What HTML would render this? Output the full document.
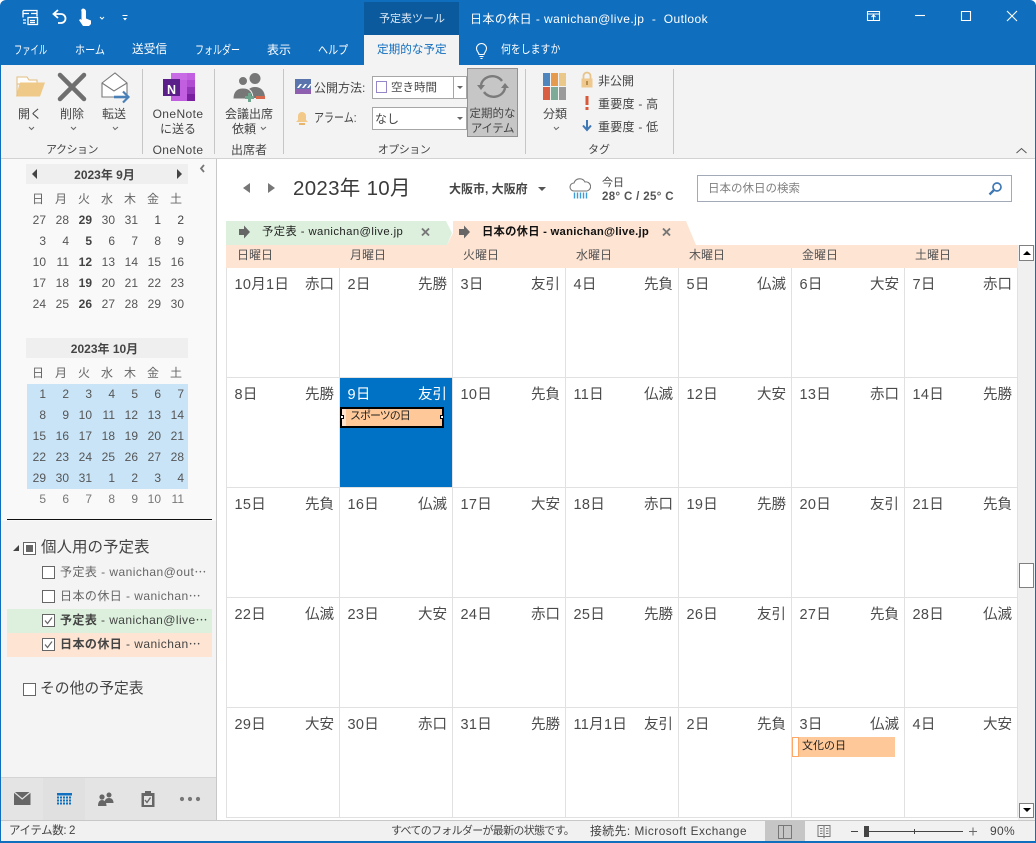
<!DOCTYPE html>
<html lang="ja"><head><meta charset="utf-8"><title>Outlook</title>
<style>
*{box-sizing:border-box}
html,body{margin:0;padding:0;background:#fff}
body{width:1036px;height:843px;position:relative;overflow:hidden;font-family:"Liberation Sans","Noto Sans CJK JP",sans-serif;color:#444;font-size:12px}
.a{position:absolute}
.t{position:absolute;white-space:nowrap;line-height:16px;height:16px}
.c{transform:translateX(-50%)}
.w{color:#fff}
.sx{transform-origin:left center}
.sep{position:absolute;width:1px;top:69px;height:85px;background:#c6c6c6}
.mc{position:absolute;left:27px;width:161px;display:grid;grid-template-columns:repeat(7,23px);grid-auto-rows:21px;font-size:12px;line-height:21px;text-align:right;color:#555}
.mc span{padding-right:4px}
.mc b{padding-right:4px;color:#444}
.mh{position:absolute;left:26px;width:162px;height:20px;background:#efefef;text-align:center;font-weight:bold;font-size:12px;line-height:22px;color:#444;padding-right:5px}
.wd{text-align:center;font-size:12px;color:#666}
.mc span.wd{padding:0 1px 0 0}
.cb{position:absolute;width:13px;height:13px;border:1px solid #666;background:#fff}
.grid{position:absolute;left:227px;top:268px;display:grid;grid-template-columns:repeat(7,113px);grid-auto-rows:110px;border-left:0}
.grid div{position:relative;border-right:1px solid #e1e1e1;border-bottom:1px solid #e1e1e1;font-size:14.5px;color:#4a4a4a}
.grid b,.grid i{position:absolute;top:8px;font-weight:normal;font-style:normal;line-height:18px;white-space:nowrap}
.grid b{left:7.500px;letter-spacing:.3px}.grid i{right:5px}
.grid .sel{background:#0072c6;color:#fff;margin-top:0}
.wh{position:absolute;top:247px;font-size:12px;line-height:16px;color:#555}
</style></head><body>

<!-- title bar -->
<div class="a" style="left:0;top:0;width:1036px;height:65px;background:#106ebe;border-radius:6px 6px 0 0"></div>
<div class="a" style="left:364px;top:2px;width:95px;height:33px;background:#0b5a9e"></div>
<div class="a" style="left:364px;top:35px;width:95px;height:30px;background:#f3f3f3"></div>
<div class="t w c" style="left:412px;top:11px;font-size:11px;color:#dbe8f5">予定表ツール</div>
<div class="t w" style="left:470px;top:11px;font-size:12px;letter-spacing:.42px">日本の休日 - wanichan@live.jp&nbsp; -&nbsp; Outlook</div>

<svg class="a" style="left:0;top:0" width="200" height="35" fill="none" stroke="#fff" stroke-width="1.3">
<path d="M23 10.500h14v6M23 10.500v7M23 13.500h6M31 13.500h6M28 17.500h9.500v7H28zM23 20h3M23 23h3M30 20.500h5M30 22.500h5"/>
<path d="M58 10l-4.500 4 4.500 4M54 14h7a4.500 4.500 0 0 1 0 9h-3" stroke-width="1.800"/>
<path d="M83 8.500a3 3 0 0 1 3 3v7l5 2v3.500l-2 2h-6l-4-6 1.500-1 1 1V11.500a2 2 0 0 1 1.500-3z" fill="#fff" stroke="none"/>
<path d="M100 17l2 2 2-2" stroke-width="1"/><path d="M122.500 15.500h5" stroke-width="1"/>
<path d="M123 18h4l-2 2.500z" fill="#fff" stroke="none"/>
</svg>

<div class="t w sx" style="left:14px;top:42px;font-size:12px;transform:scaleX(.69)">ファイル</div>
<div class="t w sx" style="left:75px;top:42px;font-size:12px;transform:scaleX(.84)">ホーム</div>
<div class="t w" style="left:132px;top:42px;font-size:11.700px">送受信</div>
<div class="t w sx" style="left:195px;top:42px;font-size:12px;transform:scaleX(.75)">フォルダー</div>
<div class="t w" style="left:267px;top:42px;font-size:12px">表示</div>
<div class="t w sx" style="left:318px;top:42px;font-size:12px;transform:scaleX(.84)">ヘルプ</div>
<div class="t" style="left:377px;top:42px;font-size:11.600px;color:#106ebe">定期的な予定</div>
<svg class="a" style="left:474px;top:42px" width="16" height="18" fill="none" stroke="#fff" stroke-width="1.100"><path d="M5 12.500c0-2-2.500-3-2.500-6a5 5 0 0 1 10 0c0 3-2.500 4-2.500 6zM5.500 14.500h4M6.500 16.500h2"/></svg>
<div class="t w sx" style="left:501px;top:42px;font-size:11.500px;transform:scaleX(.86)">何をしますか</div>

<svg class="a" style="left:860px;top:5px" width="170" height="22" fill="none" stroke="#fff" stroke-width="1.100">
<path d="M7.500 6.500h12v9h-12zM7.500 9h12M13.500 15V10.500M11.500 12l2-2 2 2"/>
<path d="M55 10.500h10"/>
<path d="M101.500 6.500h9v9h-9z"/>
<path d="M147 6l10 10M157 6l-10 10"/>
</svg>

<!-- ribbon -->
<div class="a" style="left:1px;top:65px;width:1034px;height:94px;background:#f3f3f3;border-bottom:1px solid #d2d2d2"></div>
<div class="sep" style="left:142px"></div><div class="sep" style="left:214px"></div><div class="sep" style="left:283px"></div><div class="sep" style="left:525px"></div><div class="sep" style="left:673px"></div>

<svg class="a" style="left:0;top:65px" width="300" height="45">
<!-- folder -->
<path d="M17 12h10l2 3h8v4H17z" fill="#fdfdfd" stroke="#e3bd7e"/>
<path d="M20 17.500h25l-5 14H16z" fill="#efc987"/>
<path d="M17 13v18" stroke="#e3bd7e"/>
<!-- X -->
<path d="M60 10l24 24M84 10L60 34" stroke="#6f6f6f" stroke-width="4.500" stroke-linecap="round" fill="none"/>
<!-- envelope -->
<path d="M102 18l13-10 12 10v14h-25z" fill="#fff" stroke="#7a7a7a" stroke-width="1.100"/>
<path d="M102 18l12 8 13-8" fill="none" stroke="#7a7a7a" stroke-width="1.100"/>
<path d="M114 32h13" stroke="#4a80b8" stroke-width="2.600" fill="none"/>
<path d="M123 26.500l5.500 5.500-5.500 5.500" stroke="#4a80b8" stroke-width="2.200" fill="none"/>
<!-- OneNote -->
<rect x="171" y="8" width="24" height="28" fill="#c25fe0"/>
<rect x="187" y="15" width="8" height="7" fill="#b14cd2"/><rect x="187" y="22" width="8" height="7" fill="#9436b8"/><rect x="187" y="29" width="8" height="7" fill="#7a1fa0"/>
<rect x="171" y="8" width="16" height="7" fill="#c86be4"/>
<rect x="163" y="14" width="17" height="17" fill="#5b1f8a"/>
<!-- people -->
<g fill="#777"><circle cx="255" cy="13.500" r="5.500"/><path d="M246 33c0-7 3-11 9-11s10 4 10 11z"/><circle cx="243" cy="16" r="4.500" stroke="#f3f3f3"/><path d="M233 34c0-7 3-11 10-11s10 4 10 11z" stroke="#f3f3f3"/></g>
<path d="M249.500 28v9M245 32.500h9" stroke="#6fa58f" stroke-width="3" fill="none"/>
<rect x="256" y="31" width="9" height="3" fill="#d9694d"/>
</svg>
<div class="t w" style="left:167px;top:83px;font-size:12.500px;font-weight:bold;height:14px;line-height:14px">N</div>

<div class="t c" style="left:30px;top:106px">開く</div>
<div class="t c" style="left:72px;top:106px">削除</div>
<div class="t c" style="left:114px;top:106px">転送</div>
<svg class="a" style="left:0;top:124px" width="600" height="10" fill="none" stroke="#666"><path d="M29 3l2.500 2.500L34 3M71 3l2.500 2.500L76 3M113 3l2 2.500L118 3M261 3l2 2.500L266 3M554 3l2 2.500L559 3"/></svg>
<div class="t c" style="left:178px;top:106px;font-size:12px;letter-spacing:.4px">OneNote</div>
<div class="t c" style="left:178px;top:121px">に送る</div>
<div class="t c" style="left:249px;top:106px">会議出席</div>
<div class="t" style="left:232px;top:121px">依頼</div>
<div class="t c" style="left:72px;top:142px;font-size:11px;letter-spacing:-.5px">アクション</div>
<div class="t c" style="left:178px;top:142px;letter-spacing:.4px">OneNote</div>
<div class="t c" style="left:249px;top:142px">出席者</div>
<div class="t c" style="left:404px;top:142px;font-size:11px;letter-spacing:-.5px">オプション</div>
<div class="t c" style="left:599px;top:142px;font-size:11px">タグ</div>

<svg class="a" style="left:294px;top:78px" width="18" height="17"><rect x="1" y="1" width="16" height="15" fill="#5a74ae"/><rect x="1" y="11" width="16" height="5" fill="#8e5fae"/><path d="M3 10l3-4h2l-3 4zM8 10l3-4h2l-3 4zM13 10l3-4h1v1l-2 3z" fill="#fff"/></svg>
<div class="t" style="left:314px;top:80px">公開方法:</div>
<svg class="a" style="left:295px;top:110px" width="14" height="16"><path d="M3 10V6a4 4 0 0 1 8 0v4l2 2H1z" fill="#f2c988"/><rect x="4" y="13" width="6" height="2" fill="#e8b56e"/></svg>
<div class="t sx" style="left:314px;top:110px;font-size:12.500px;transform:scaleX(.8)">アラーム:</div>
<div class="a" style="left:372px;top:76px;width:95px;height:23px;background:#fff;border:1px solid #a6a6a6"></div>
<div class="a" style="left:453px;top:76px;width:1px;height:23px;background:#a6a6a6"></div>
<div class="a" style="left:376px;top:81px;width:11px;height:12px;border:1px solid #9787c8;background:#fff"></div>
<div class="t" style="left:391px;top:80px;font-size:11.500px;line-height:17px">空き時間</div>
<div class="a" style="left:457px;top:86px;border:3px solid transparent;border-top:3px solid #666;border-bottom:0"></div>
<div class="a" style="left:372px;top:107px;width:95px;height:23px;background:#fff;border:1px solid #a6a6a6"></div>
<div class="t" style="left:375px;top:111px">なし</div>
<div class="a" style="left:457px;top:117px;border:3px solid transparent;border-top:3px solid #666;border-bottom:0"></div>
<div class="a" style="left:467px;top:68px;width:51px;height:69px;background:#c6c6c6;border:1px solid #929292"></div>
<svg class="a" style="left:476px;top:72px" width="34" height="30" fill="none" stroke="#7b7b7b" stroke-width="2.400"><path d="M5 13a11.500 10.500 0 0 1 21-4M29 16a11.500 10.500 0 0 1-21 4"/><path d="M1 13h8l-4 5zM25 16h8l-4-5z" fill="#7b7b7b" stroke="none"/></svg>
<div class="t c" style="left:492.500px;top:106px;font-size:11.500px">定期的な</div>
<div class="t c" style="left:492.500px;top:121px;font-size:11.500px;letter-spacing:-.4px">アイテム</div>

<svg class="a" style="left:543px;top:73px" width="24" height="28"><rect width="7" height="13" fill="#4f86bd"/><rect x="8" width="7" height="13" fill="#e59a4e"/><rect x="16" width="7" height="13" fill="#eac88a"/><rect y="14" width="7" height="13" fill="#d85f41"/><rect x="8" y="14" width="7" height="13" fill="#7eab98"/><rect x="16" y="14" width="7" height="13" fill="#9a9a9a"/></svg>
<div class="t c" style="left:555px;top:106px">分類</div>
<svg class="a" style="left:580px;top:71px" width="14" height="17"><path d="M3.500 8V5a3.500 3.500 0 0 1 7 0v3" fill="none" stroke="#e8c48a" stroke-width="1.800"/><rect x="1.500" y="7.500" width="11" height="9" fill="#eec88c"/><rect x="6" y="10" width="2" height="4" fill="#b98f50"/></svg>
<div class="t" style="left:598px;top:73px">非公開</div>
<svg class="a" style="left:581px;top:95px" width="12" height="16"><path d="M4.500 1h3v9h-3z" fill="#d9583a"/><rect x="4.500" y="12" width="3" height="3" fill="#d9583a"/></svg>
<div class="t" style="left:598px;top:96px;letter-spacing:.25px">重要度 - 高</div>
<svg class="a" style="left:581px;top:118px" width="12" height="15"><path d="M6 2v9M2 7.500l4 4.500 4-4.500" fill="none" stroke="#3f78b4" stroke-width="2"/></svg>
<div class="t" style="left:598px;top:119px;letter-spacing:.25px">重要度 - 低</div>
<svg class="a" style="left:1015px;top:146px" width="14" height="10" fill="none" stroke="#555"><path d="M1.500 7l5-4.500 5 4.500"/></svg>

<!-- sidebar -->
<div class="a" style="left:1px;top:159px;width:215px;height:362px;background:#f9f9f9"></div>
<div class="a" style="left:1px;top:521px;width:215px;height:257px;background:#f4f4f4"></div>
<div class="a" style="left:216px;top:159px;width:1px;height:662px;background:#c8c8c8"></div>
<svg class="a" style="left:198px;top:163px" width="9" height="11"><path d="M6 2L3 5.500 6 9" fill="none" stroke="#777" stroke-width="1.800"/></svg>

<div class="mh" style="top:164px">2023年 9月</div>
<div class="a" style="left:32px;top:169px;border:5px solid transparent;border-right:5px solid #444;border-left:0"></div>
<div class="a" style="left:177px;top:169px;border:5px solid transparent;border-left:5px solid #444;border-right:0"></div>
<div class="mc" style="top:189px">
<span class="wd">日</span><span class="wd">月</span><span class="wd">火</span><span class="wd">水</span><span class="wd">木</span><span class="wd">金</span><span class="wd">土</span>
<span>27</span><span>28</span><b>29</b><span>30</span><span>31</span><span style="color:#444">1</span><span style="color:#444">2</span>
<span>3</span><span>4</span><b>5</b><span>6</span><span>7</span><span>8</span><span>9</span>
<span>10</span><span>11</span><b>12</b><span>13</span><span>14</span><span>15</span><span>16</span>
<span>17</span><span>18</span><b>19</b><span>20</span><span>21</span><span>22</span><span>23</span>
<span>24</span><span>25</span><b>26</b><span>27</span><span>28</span><span>29</span><span>30</span>
</div>

<div class="mh" style="top:338px">2023年 10月</div>
<div class="a" style="left:27px;top:384px;width:161px;height:105px;background:#c9e4f7"></div>
<div class="mc" style="top:363px">
<span class="wd">日</span><span class="wd">月</span><span class="wd">火</span><span class="wd">水</span><span class="wd">木</span><span class="wd">金</span><span class="wd">土</span>
<span>1</span><span>2</span><span>3</span><span>4</span><span>5</span><span>6</span><span>7</span>
<span>8</span><span>9</span><span>10</span><span>11</span><span>12</span><span>13</span><span>14</span>
<span>15</span><span>16</span><span>17</span><span>18</span><span>19</span><span>20</span><span>21</span>
<span>22</span><span>23</span><span>24</span><span>25</span><span>26</span><span>27</span><span>28</span>
<span>29</span><span>30</span><span>31</span><span>1</span><span>2</span><span>3</span><span>4</span>
<span style="color:#777">5</span><span style="color:#777">6</span><span style="color:#777">7</span><span style="color:#777">8</span><span style="color:#777">9</span><span style="color:#777">10</span><span style="color:#777">11</span>
</div>
<div class="a" style="left:7px;top:519px;width:205px;height:1px;background:#111"></div>

<svg class="a" style="left:12px;top:544px" width="8" height="8"><path d="M1 7h6V1z" fill="#444"/></svg>
<div class="cb" style="left:23px;top:542px"></div><div class="a" style="left:26px;top:545px;width:7px;height:7px;background:#666"></div>
<div class="t" style="left:41px;top:540px;font-size:15.500px">個人用の予定表</div>
<div class="cb" style="left:42px;top:566px"></div>
<div class="t" style="left:60px;top:564px;font-size:12px;color:#666;letter-spacing:.45px">予定表 - wanichan@out⋯</div>
<div class="cb" style="left:42px;top:590px"></div>
<div class="t" style="left:60px;top:588px;font-size:12px;color:#666;letter-spacing:.45px">日本の休日 - wanichan⋯</div>
<div class="a" style="left:7px;top:609px;width:205px;height:24px;background:#dcf0dd"></div>
<div class="a" style="left:7px;top:633px;width:205px;height:24px;background:#fde4d3"></div>
<div class="cb" style="left:42px;top:614px"></div>
<div class="t" style="left:60px;top:612px;font-size:12px;letter-spacing:.42px"><b>予定表</b> - wanichan@live⋯</div>
<div class="cb" style="left:42px;top:638px"></div>
<div class="t" style="left:60px;top:636px;font-size:12px;letter-spacing:.45px"><b>日本の休日</b> - wanichan⋯</div>
<svg class="a" style="left:42px;top:614px" width="13" height="38" fill="none" stroke="#666" stroke-width="1.200"><path d="M3 6.500l2.500 3L10 3.500M3 30.500l2.500 3 4.500-6"/></svg>
<div class="cb" style="left:23px;top:683px"></div>
<div class="t" style="left:40px;top:681px;font-size:14.800px">その他の予定表</div>

<!-- nav -->
<div class="a" style="left:1px;top:777px;width:215px;height:44px;background:#e4e4e4;border-top:1px solid #d4d4d4"></div>
<div class="a" style="left:43px;top:778px;width:42px;height:43px;background:#e0e0e0"></div>
<svg class="a" style="left:0;top:778px" width="216" height="43">
<rect x="14" y="14" width="16.500" height="13" fill="#666"/><path d="M14 14l8.200 7 8.300-7" fill="none" stroke="#e4e4e4" stroke-width="1.200"/>
<rect x="57" y="15" width="15" height="2.500" fill="#0f6fc1"/>
<path d="M57 19.500h15M57 22.500h15M57 25.500h15" stroke="#0f6fc1" stroke-width="2" stroke-dasharray="2 1"/>
<g fill="#666"><circle cx="109" cy="17" r="2.500"/><path d="M104.500 25c0-3 1.500-5 4.500-5s4.500 2 4.500 5z"/><circle cx="102" cy="19" r="2.600"/><path d="M98 28c0-4 1.500-6 4-6s4.500 2 4.500 6z"/></g>
<path d="M141.500 15h13v14h-13z" fill="#666"/><rect x="144" y="18" width="8" height="9" fill="#e4e4e4"/><rect x="145" y="13" width="6" height="3" fill="#666"/><path d="M145 22l2 2.500 3.500-5" fill="none" stroke="#666" stroke-width="1.400"/>
<circle cx="182" cy="21" r="2.100" fill="#777"/><circle cx="190" cy="21" r="2.100" fill="#777"/><circle cx="198" cy="21" r="2.100" fill="#777"/>
</svg>

<!-- cal header -->
<div class="a" style="left:243px;top:183px;border:5px solid transparent;border-right:7px solid #777;border-left:0"></div>
<div class="a" style="left:268px;top:183px;border:5px solid transparent;border-left:7px solid #777;border-right:0"></div>
<div class="t" style="left:293px;top:176px;font-size:20.500px;line-height:26px;height:26px;color:#3a3a3a;letter-spacing:.3px">2023年 10月</div>
<div class="t" style="left:449px;top:181px;font-size:12px;font-weight:bold;color:#444">大阪市, 大阪府</div>
<div class="a" style="left:538px;top:187px;border:4px solid transparent;border-top:4px solid #555;border-bottom:0"></div>
<svg class="a" style="left:569px;top:177px" width="22" height="24"><path d="M5 14a4 4 0 0 1 0-8 6 6 0 0 1 11-1 4.500 4.500 0 0 1 2 9z" fill="#fff" stroke="#777" stroke-width="1.100"/><path d="M5.500 15.500v6M8.500 15.500v6M11.500 15.500v6M14.500 15.500v6M17.500 15.500v6" stroke="#3d9bd6" stroke-width="1.400"/></svg>
<div class="t" style="left:602px;top:175px;font-size:11px">今日</div>
<div class="t" style="left:602px;top:189px;font-size:11.500px;font-weight:bold;color:#555;letter-spacing:.35px">28° C / 25° C</div>
<div class="a" style="left:697px;top:175px;width:315px;height:27px;border:1px solid #a2aab8;background:#fff"></div>
<div class="t" style="left:708px;top:181px;font-size:11.500px;color:#808080">日本の休日の検索</div>
<svg class="a" style="left:988px;top:181px" width="15" height="15"><circle cx="9" cy="6" r="4" fill="none" stroke="#3f78b4" stroke-width="1.700"/><path d="M6 9l-4.500 4.500" stroke="#3f78b4" stroke-width="2.300"/></svg>

<!-- tabs -->
<svg class="a" style="left:226px;top:221px" width="480" height="24">
<path d="M0 0H220L226 12 221 24H0z" fill="#dcf0dd"/>
<path d="M227 0H460L470 24H221L227 12z" fill="#fde4d3"/>
<path d="M13 7h5V3.500L24 10 18 16.500V13h-5z" fill="#666" transform="translate(0,1)"/>
<path d="M233 7h5V3.500L244 10 238 16.500V13h-5z" fill="#666" transform="translate(0,1)"/>
<path d="M196 7.500l7 7M203 7.500l-7 7M437 7.500l7 7M444 7.500l-7 7" stroke="#777" stroke-width="1.900"/>
</svg>
<div class="t" style="left:262px;top:224px;font-size:11.300px;color:#222;letter-spacing:.42px">予定表 - wanichan@live.jp</div>
<div class="t" style="left:482px;top:224px;font-size:11.300px;font-weight:bold;color:#111;letter-spacing:.25px">日本の休日 - wanichan@live.jp</div>
<div class="a" style="left:226px;top:245px;width:792px;height:23px;background:#fde4d3"></div>
<div class="wh" style="left:237px">日曜日</div><div class="wh" style="left:350px">月曜日</div><div class="wh" style="left:463px">火曜日</div><div class="wh" style="left:576px">水曜日</div><div class="wh" style="left:689px">木曜日</div><div class="wh" style="left:802px">金曜日</div><div class="wh" style="left:915px">土曜日</div>

<!-- grid -->
<div class="a" style="left:226px;top:268px;width:1px;height:550px;background:#e1e1e1"></div>
<div class="grid">
<div><b>10月1日</b><i>赤口</i></div><div><b>2日</b><i>先勝</i></div><div><b>3日</b><i>友引</i></div><div><b>4日</b><i>先負</i></div><div><b>5日</b><i>仏滅</i></div><div><b>6日</b><i>大安</i></div><div><b>7日</b><i>赤口</i></div>
<div><b>8日</b><i>先勝</i></div><div class="sel"><b>9日</b><i>友引</i></div><div><b>10日</b><i>先負</i></div><div><b>11日</b><i>仏滅</i></div><div><b>12日</b><i>大安</i></div><div><b>13日</b><i>赤口</i></div><div><b>14日</b><i>先勝</i></div>
<div><b>15日</b><i>先負</i></div><div><b>16日</b><i>仏滅</i></div><div><b>17日</b><i>大安</i></div><div><b>18日</b><i>赤口</i></div><div><b>19日</b><i>先勝</i></div><div><b>20日</b><i>友引</i></div><div><b>21日</b><i>先負</i></div>
<div><b>22日</b><i>仏滅</i></div><div><b>23日</b><i>大安</i></div><div><b>24日</b><i>赤口</i></div><div><b>25日</b><i>先勝</i></div><div><b>26日</b><i>友引</i></div><div><b>27日</b><i>先負</i></div><div><b>28日</b><i>仏滅</i></div>
<div><b>29日</b><i>大安</i></div><div><b>30日</b><i>赤口</i></div><div><b>31日</b><i>先勝</i></div><div><b>11月1日</b><i>友引</i></div><div><b>2日</b><i>先負</i></div><div><b>3日</b><i>仏滅</i></div><div><b>4日</b><i>大安</i></div>
</div>

<!-- events -->
<div class="a" style="left:340px;top:407px;width:104px;height:21px;background:#ffc898;border:2px solid #000"></div>
<div class="a" style="left:342px;top:409px;width:4px;height:17px;background:#ffe3cf"></div>
<div class="a" style="left:340px;top:415px;width:4px;height:4px;background:#fff;border:1px solid #000"></div>
<div class="a" style="left:440px;top:415px;width:4px;height:4px;background:#fff;border:1px solid #000"></div>
<div class="t" style="left:350px;top:408px;font-size:11px;color:#222;letter-spacing:-1px">スポーツの日</div>
<div class="a" style="left:792px;top:737px;width:103px;height:20px;background:#ffc898"></div>
<div class="a" style="left:792px;top:737px;width:7px;height:20px;background:#fff;border:1px solid #ffa766"></div>
<div class="t" style="left:802px;top:738px;font-size:11px;color:#222">文化の日</div>

<!-- scrollbar -->
<div class="a" style="left:1018px;top:245px;width:17px;height:575px;background:#f0f0f0"></div>
<div class="a" style="left:1019px;top:245px;width:15px;height:16px;background:#fff;border:1px solid #808080"></div>
<div class="a" style="left:1023px;top:251px;border:4px solid transparent;border-bottom:4px solid #000;border-top:0"></div>
<div class="a" style="left:1019px;top:803px;width:15px;height:15px;background:#fff;border:1px solid #808080"></div>
<div class="a" style="left:1023px;top:808px;border:4px solid transparent;border-top:4px solid #000;border-bottom:0"></div>
<div class="a" style="left:1019px;top:563px;width:15px;height:25px;background:#fff;border:1px solid #808080"></div>

<!-- status -->
<div class="a" style="left:1px;top:820px;width:1034px;height:21px;background:#f1f1f1;border-top:1px solid #c8c8c8"></div>
<div class="t" style="left:9px;top:823px;font-size:11.500px;letter-spacing:-.4px">アイテム数: 2</div>
<div class="t" style="left:391px;top:823px;font-size:11px;letter-spacing:-.7px">すべてのフォルダーが最新の状態です。</div>
<div class="t" style="left:590px;top:823px;font-size:11.800px;letter-spacing:.5px">接続先: Microsoft Exchange</div>
<div class="a" style="left:765px;top:821px;width:40px;height:20px;background:#c6c6c6"></div>
<svg class="a" style="left:765px;top:821px" width="270" height="20" fill="none" stroke="#777">
<path d="M13.500 4.500h13v13h-13zM18.500 4.500v13"/>
<path d="M53 4.500h5.500l.5 1 .5-1H65v11h-5.500l-.5 1-.5-1H53zM59 5v11M55 7.500h2.500M55 10h2.500M55 12.500h2.500M61 7.500h2.500M61 10h2.500M61 12.500h2.500"/>
<path d="M86 10.500h7M104 10.500h94M149.500 8v5" stroke="#444"/>
<rect x="99" y="5" width="5" height="11" fill="#444" stroke="none"/>
<path d="M204 10.500h8M208 6.500v8" stroke="#666"/>
</svg>
<div class="t" style="left:990px;top:823px;font-size:12px;letter-spacing:.3px">90%</div>

<!-- window edge -->
<div class="a" style="left:0;top:60px;width:1px;height:783px;background:#106ebe"></div>
<div class="a" style="left:1035px;top:60px;width:1px;height:783px;background:#106ebe"></div>
<div class="a" style="left:0;top:841px;width:1036px;height:2px;background:#106ebe"></div>
</body></html>
